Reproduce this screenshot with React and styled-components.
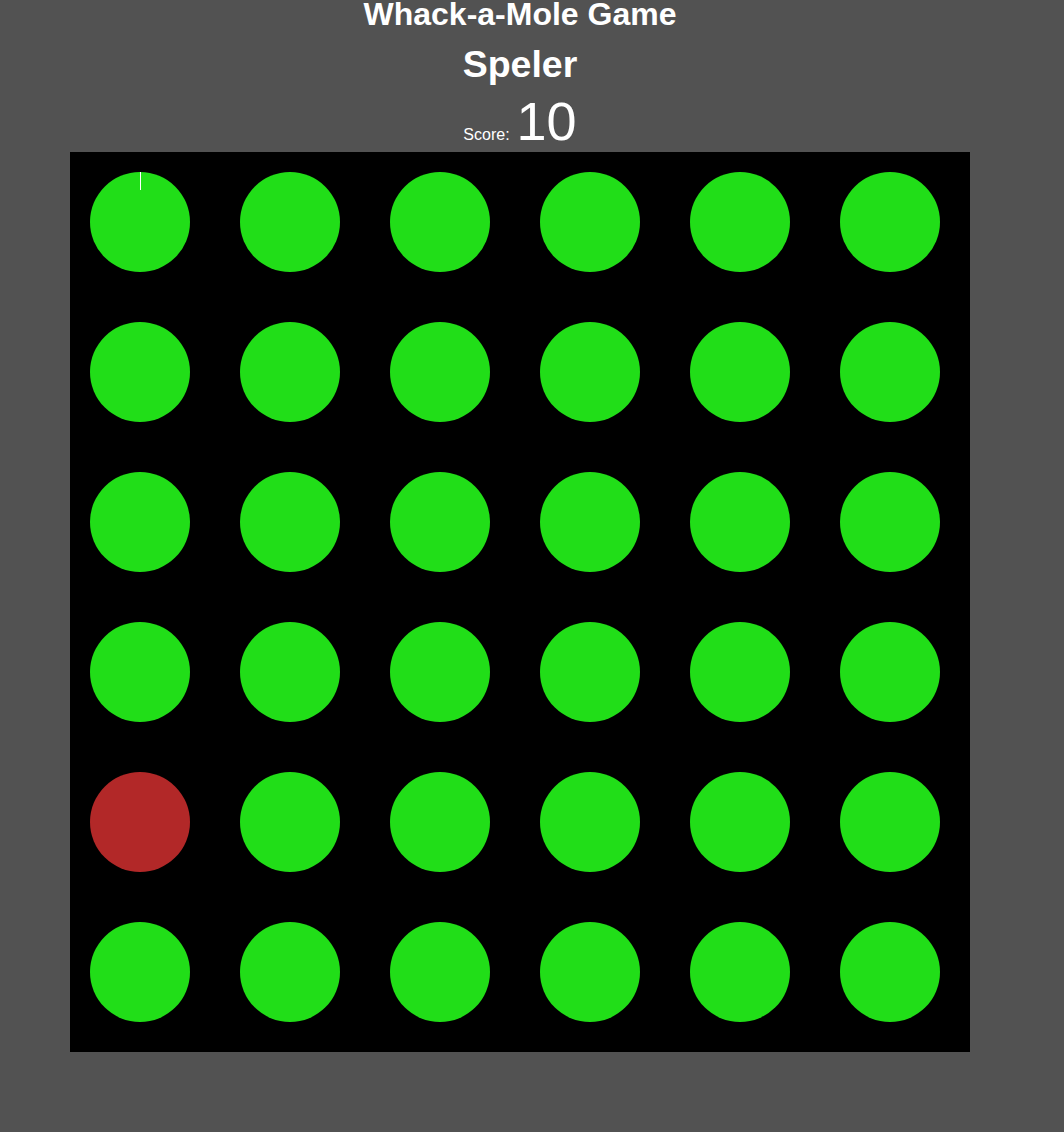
import React from 'react'
import styled, { createGlobalStyle } from 'styled-components'

// global page styles
const GlobalStyle = createGlobalStyle`
    body {
        margin: 0;
        background-color: #525252;
        font-family: "Liberation Sans", Arial, sans-serif;
        color: white;
    }
`

// styled components
const Page = styled.div`
    width: 1040px;
    min-height: 1132px;
    display: flex;
    flex-direction: column;
    align-items: center;
`

const Title = styled.h1`
    margin: 0;
    font-size: 32px;
    line-height: 28px;
    font-weight: bold;
`

const Player = styled.h2`
    margin: 15px 0 0;
    font-size: 37.5px;
    line-height: 43px;
    font-weight: bold;
`

const ScoreRow = styled.div`
    margin-top: 6px;
    display: flex;
    align-items: baseline;
    gap: 7px;
    line-height: 58px;
    height: 58px;
`

const ScoreLabel = styled.span`
    font-size: 16px;
`

const ScoreValue = styled.span`
    font-size: 54px;
`

const Board = styled.div`
    margin-top: 2px;
    width: 900px;
    height: 900px;
    background-color: black;
    display: grid;
    grid-template-columns: repeat(6, 150px);
    grid-template-rows: repeat(6, 150px);
`

const Cell = styled.div`
    padding: 20px 0 0 20px;
`

const Hole = styled.div`
    position: relative;
    width: 100px;
    height: 100px;
    border-radius: 50%;
    background-color: ${(props) => (props.$mole ? '#b22828' : '#21de18')};
`

const Caret = styled.span`
    position: absolute;
    left: 50px;
    top: 0;
    width: 1px;
    height: 18px;
    background-color: white;
`

// board data
const holes = Array.from({ length: 36 }, (_, i) => ({ id: i, mole: i === 24 }))

const App = () => {
    return (
        <Page>
            <GlobalStyle />
            <Title>Whack-a-Mole Game</Title>
            <Player>Speler</Player>
            <ScoreRow>
                <ScoreLabel>Score:</ScoreLabel>
                <ScoreValue>10</ScoreValue>
            </ScoreRow>
            <Board>
                {holes.map((hole) => (
                    <Cell key={hole.id}>
                        <Hole $mole={hole.mole}>{hole.id === 0 && <Caret />}</Hole>
                    </Cell>
                ))}
            </Board>
        </Page>
    )
}

export default App
